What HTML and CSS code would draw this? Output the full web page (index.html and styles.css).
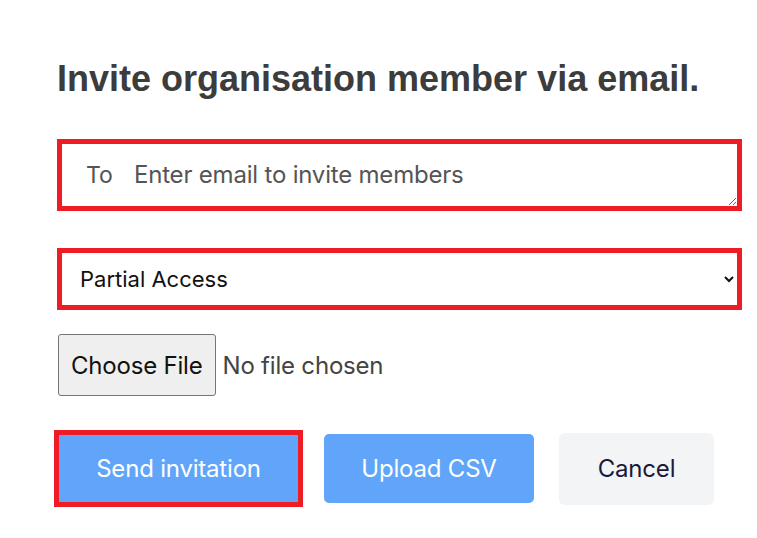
FILE: index.html
```html
<!DOCTYPE html>
<html lang="en">
<head>
<meta charset="utf-8">
<title>Invite member</title>
<link rel="stylesheet" href="styles.css">
</head>
<body>
<main class="invite">
  <h1 class="invite-title">Invite organisation member via email.</h1>
  <div class="to-field">
    <span class="to-label">To</span>
    <textarea class="to-input" placeholder="Enter email to invite members"></textarea>
  </div>
  <select class="access-select">
    <option>Partial Access</option>
    <option>Full Access</option>
  </select>
  <div class="file-row">
    <input class="file-input" type="file">
  </div>
  <div class="actions">
    <button class="btn btn-send" type="button">Send invitation</button>
    <button class="btn btn-upload" type="button">Upload CSV</button>
    <button class="btn btn-cancel" type="button">Cancel</button>
  </div>
</main>
</body>
</html>
```
FILE: styles.css
```css
* { box-sizing: border-box; }
html, body { margin: 0; padding: 0; background: #ffffff; }
body { font-family: Inter, "Noto Sans", sans-serif; }

.invite {
  display: flex;
  flex-direction: column;
  align-items: flex-start;
  padding: 58px 15px 0 57px;
}

.invite-title {
  margin: 0;
  font-family: "Liberation Sans", Arial, sans-serif;
  font-weight: 700;
  font-size: 36px;
  line-height: 41px;
  color: #3c3c3c;
}

.to-field {
  position: relative;
  width: 685px;
  margin-top: 40px;
  display: flex;
}

.to-label {
  position: absolute;
  left: 29px;
  top: 22px;
  font-size: 23px;
  line-height: 29px;
  color: #555555;
}

.to-input {
  width: 685px;
  height: 72px;
  border: 5px solid #ee1c25;
  padding: 16px 20px 16px 72px;
  font-family: Inter, "Noto Sans", sans-serif;
  font-size: 24px;
  line-height: 29px;
  letter-spacing: -0.2px;
  color: #333;
  resize: vertical;
  outline: none;
}
.to-input::placeholder { color: #555555; }

.access-select {
  width: 685px;
  height: 62px;
  margin-top: 37px;
  border: 5px solid #ee1c25;
  border-radius: 0;
  background: #ffffff;
  padding: 0 12px 0 14px;
  font-family: Inter, "Noto Sans", sans-serif;
  font-size: 22px;
  color: #111111;
  outline: none;
}

.file-row {
  margin-top: 24px;
  padding-left: 1px;
}

.file-input {
  font-family: Inter, "Noto Sans", sans-serif;
  font-size: 24px;
  letter-spacing: -0.2px;
  color: #444444;
}
.file-input::file-selector-button {
  font-family: Inter, "Noto Sans", sans-serif;
  font-size: 24px;
  letter-spacing: -0.2px;
  color: #111111;
  background: #efefef;
  border: 1px solid #767676;
  border-radius: 3px;
  height: 62px;
  padding: 0 12px;
  margin-right: 7px;
}

.actions {
  display: flex;
  align-items: center;
  margin-top: 34px;
  margin-left: -3px;
}

.btn {
  font-family: Inter, "Noto Sans", sans-serif;
  font-size: 24px;
  letter-spacing: -0.2px;
  border: none;
  cursor: pointer;
}

.btn-send {
  width: 249px;
  height: 77px;
  background: #60a5fa;
  color: #ffffff;
  border: 5px solid #ee1c25;
  border-radius: 0;
}

.btn-upload {
  width: 210px;
  height: 69px;
  margin-left: 21px;
  background: #60a5fa;
  color: #ffffff;
  border-radius: 5px;
}

.btn-cancel {
  width: 155px;
  height: 72px;
  margin-left: 25px;
  background: #f3f4f6;
  color: #1a1a3a;
  border-radius: 6px;
}
```
